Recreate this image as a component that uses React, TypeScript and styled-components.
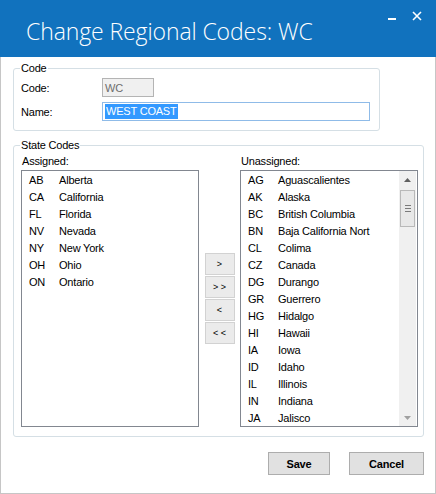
import React from 'react'
import styled, { createGlobalStyle } from 'styled-components'

const GlobalStyle = createGlobalStyle`
  html, body {
    margin: 0;
    padding: 0;
    background: #ffffff;
  }
  * {
    box-sizing: border-box;
  }
`

const assigned = [
  ['AB', 'Alberta'],
  ['CA', 'California'],
  ['FL', 'Florida'],
  ['NV', 'Nevada'],
  ['NY', 'New York'],
  ['OH', 'Ohio'],
  ['ON', 'Ontario'],
]

const unassigned = [
  ['AG', 'Aguascalientes'],
  ['AK', 'Alaska'],
  ['BC', 'British Columbia'],
  ['BN', 'Baja California Nort'],
  ['CL', 'Colima'],
  ['CZ', 'Canada'],
  ['DG', 'Durango'],
  ['GR', 'Guerrero'],
  ['HG', 'Hidalgo'],
  ['HI', 'Hawaii'],
  ['IA', 'Iowa'],
  ['ID', 'Idaho'],
  ['IL', 'Illinois'],
  ['IN', 'Indiana'],
  ['JA', 'Jalisco'],
]

const Window = styled.div`
  width: 436px;
  height: 494px;
  display: flex;
  flex-direction: column;
  font-family: 'Liberation Sans', Arial, sans-serif;
  font-size: 11px;
  letter-spacing: -0.2px;
  color: #000;
`

const TitleBar = styled.div`
  height: 57px;
  background: #1172be;
  display: flex;
  align-items: flex-start;
  justify-content: space-between;
  padding-left: 26px;
`

const Title = styled.div`
  font-family: 'Open Sans', 'Segoe UI', sans-serif;
  font-weight: 300;
  font-size: 23px;
  letter-spacing: -0.1px;
  color: #ffffff;
  margin-top: 15px;
  line-height: 32px;
`

const Controls = styled.div`
  display: flex;
  align-items: center;
  gap: 16px;
  padding: 11px 14px 0 0;
`

const Body = styled.div`
  flex: 1;
  display: flex;
  flex-direction: column;
  padding: 11px 11px 0 12px;
  border-left: 1px solid #c6c6c6;
  border-right: 1px solid #c6c6c6;
  border-bottom: 1px solid #c6c6c6;
`

const GroupBox = styled.div<{ $width: number; $height: number; $gapAbove?: number }>`
  position: relative;
  width: ${({ $width }) => $width}px;
  height: ${({ $height }) => $height}px;
  margin-top: ${({ $gapAbove }) => $gapAbove ?? 0}px;
  border: 1px solid #d5dfe5;
  border-radius: 3px;
`

const Legend = styled.span`
  position: absolute;
  top: -8px;
  left: 6px;
  padding: 0 1px;
  background: #ffffff;
  line-height: 14px;
`

const FormGrid = styled.div`
  display: grid;
  grid-template-columns: 81px auto;
  row-gap: 5px;
  align-items: center;
  padding: 9px 0 0 7px;
`

const Label = styled.div`
  line-height: 14px;
`

const TextBox = styled.div<{ $width: number; $disabled?: boolean }>`
  width: ${({ $width }) => $width}px;
  height: 19px;
  display: flex;
  align-items: center;
  padding: 0 2px;
  border: 1px solid ${({ $disabled }) => ($disabled ? '#b4b4b4' : '#8fbbe8')};
  background: ${({ $disabled }) => ($disabled ? '#f0f0f0' : '#ffffff')};
  color: ${({ $disabled }) => ($disabled ? '#6d6d6d' : '#000')};
`

const Selected = styled.span`
  background: #3399ff;
  color: #ffffff;
  line-height: 15px;
  padding: 0 1px;
`

const StateInner = styled.div`
  display: flex;
  padding: 8px 0 0 7px;
`

const ListColumn = styled.div`
  display: flex;
  flex-direction: column;
`

const ListLabel = styled.div`
  line-height: 14px;
  margin: 0 0 2px 1px;
`

const ListBox = styled.div`
  width: 178px;
  height: 257px;
  border: 1px solid #828790;
  background: #ffffff;
  display: flex;
  overflow: hidden;
`

const Items = styled.div`
  flex: 1;
  padding-top: 1px;
  overflow: hidden;
`

const Item = styled.div`
  display: flex;
  height: 17px;
  line-height: 17px;
  padding-left: 7px;
  white-space: nowrap;
`

const ItemCode = styled.span`
  width: 30px;
  flex: none;
`

const ScrollBar = styled.div`
  width: 17px;
  margin-right: 1px;
  background: #f0f0f0;
  display: flex;
  flex-direction: column;
  align-items: center;
`

const Arrow = styled.div`
  height: 17px;
  display: flex;
  align-items: center;
  justify-content: center;
`

const Track = styled.div`
  flex: 1;
  width: 100%;
  padding: 2px 1px 0 1px;
`

const Thumb = styled.div`
  height: 37px;
  border: 1px solid #b9b9b9;
  background: #e8e8e8;
  display: flex;
  flex-direction: column;
  align-items: center;
  justify-content: center;
  gap: 2px;
`

const Grip = styled.div`
  width: 6px;
  height: 1px;
  background: #7a7a7a;
`

const MoveColumn = styled.div`
  width: 41px;
  display: flex;
  flex-direction: column;
  justify-content: center;
  align-items: center;
  gap: 1px;
  padding-top: 15px;
`

const MoveButton = styled.button`
  width: 30px;
  height: 22px;
  border: 1px solid #d2d2d2;
  background: #ebebeb;
  font-family: 'Liberation Sans', Arial, sans-serif;
  font-size: 9px;
  color: #000;
  padding: 0;
  margin: 0;
`

const Footer = styled.div`
  display: flex;
  justify-content: flex-end;
  gap: 19px;
  margin-top: 15px;
`

const DialogButton = styled.button<{ $width: number }>`
  width: ${({ $width }) => $width}px;
  height: 23px;
  border: 1px solid #adadad;
  background: #e1e1e1;
  font-family: 'Liberation Sans', Arial, sans-serif;
  font-size: 11px;
  font-weight: bold;
  letter-spacing: -0.2px;
  color: #000;
  padding: 0;
`

const StateList = ({ label, items, scroll }: { label: string; items: string[][]; scroll?: boolean }) => (
  <ListColumn>
    <ListLabel>{label}</ListLabel>
    <ListBox>
      <Items>
        {items.map(([code, name]) => (
          <Item key={code}>
            <ItemCode>{code}</ItemCode>
            <span>{name}</span>
          </Item>
        ))}
      </Items>
      {scroll && (
        <ScrollBar>
          <Arrow>
            <svg width="7" height="4" viewBox="0 0 7 4">
              <path d="M0 4 L3.5 0 L7 4 Z" fill="#606060" />
            </svg>
          </Arrow>
          <Track>
            <Thumb>
              <Grip />
              <Grip />
              <Grip />
            </Thumb>
          </Track>
          <Arrow>
            <svg width="7" height="4" viewBox="0 0 7 4">
              <path d="M0 0 L3.5 4 L7 0 Z" fill="#a0a0a0" />
            </svg>
          </Arrow>
        </ScrollBar>
      )}
    </ListBox>
  </ListColumn>
)

const App = () => (
  <Window>
    <GlobalStyle />
    <TitleBar>
      <Title>Change Regional Codes: WC</Title>
      <Controls>
        <svg width="8" height="8" viewBox="0 0 8 8">
          <rect x="0" y="6" width="8" height="2" fill="#ffffff" />
        </svg>
        <svg width="10" height="10" viewBox="0 0 10 10">
          <path d="M1 1 L9 9 M9 1 L1 9" stroke="#ffffff" strokeWidth="1.6" />
        </svg>
      </Controls>
    </TitleBar>
    <Body>
      <GroupBox $width={367} $height={63}>
        <Legend>Code</Legend>
        <FormGrid>
          <Label>Code:</Label>
          <TextBox $width={52} $disabled>
            WC
          </TextBox>
          <Label>Name:</Label>
          <TextBox $width={268}>
            <Selected>WEST COAST</Selected>
          </TextBox>
        </FormGrid>
      </GroupBox>
      <GroupBox $width={411} $height={292} $gapAbove={14}>
        <Legend>State Codes</Legend>
        <StateInner>
          <StateList label="Assigned:" items={assigned} />
          <MoveColumn>
            <MoveButton>&gt;</MoveButton>
            <MoveButton>&gt; &gt;</MoveButton>
            <MoveButton>&lt;</MoveButton>
            <MoveButton>&lt; &lt;</MoveButton>
          </MoveColumn>
          <StateList label="Unassigned:" items={unassigned} scroll />
        </StateInner>
      </GroupBox>
      <Footer>
        <DialogButton $width={62}>Save</DialogButton>
        <DialogButton $width={75}>Cancel</DialogButton>
      </Footer>
    </Body>
  </Window>
)

export default App
